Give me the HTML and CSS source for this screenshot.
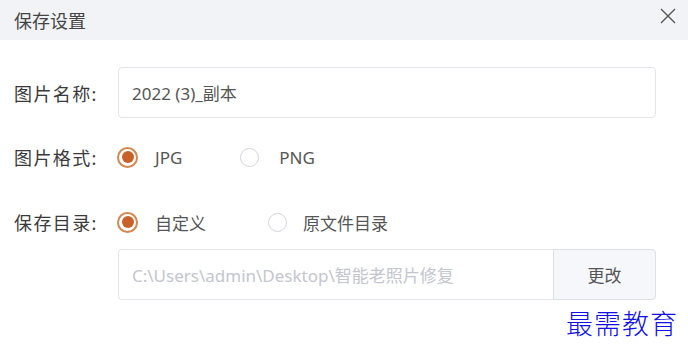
FILE: index.html
```html
<!doctype html>
<html>
<head>
    <meta charset="utf-8">
    <link rel="stylesheet" href="styles.css">
</head>
<body>

<div class="dialog">
    <div class="header">
        <h2 class="title">保存设置</h2>
        <span class="close">
            <svg width="16" height="16" viewBox="0 0 16 16">
                <path d="M1 1 L15 15 M15 1 L1 15" stroke="#555" stroke-width="1.4" fill="none"/>
            </svg>
        </span>
    </div>

    <form class="form">
        <div class="row row-name">
            <label class="label">图片名称:</label>
            <div class="input-text">2022 (3)_副本</div>
        </div>

        <div class="row row-format">
            <label class="label">图片格式:</label>
            <span class="radio checked"></span>
            <span class="radio-text">JPG</span>
            <span class="radio radio-second"></span>
            <span class="radio-text text-second">PNG</span>
        </div>

        <div class="row row-dir">
            <label class="label">保存目录:</label>
            <span class="radio checked"></span>
            <span class="radio-text">自定义</span>
            <span class="radio radio-third"></span>
            <span class="radio-text text-third">原文件目录</span>
        </div>

        <div class="path">
            <div class="path-input">C:\Users\admin\Desktop\智能老照片修复</div>
            <div class="path-button">更改</div>
        </div>
    </form>

    <div class="watermark">最需教育</div>
</div>

</body>
</html>
```

FILE: styles.css
```css
body {
    margin: 0;
    background: #fff;
    font-family: "Noto Sans", "Noto Sans CJK SC", sans-serif;
    color: #333;
}

.header {
    height: 40px;
    background: #f2f3f7;
    display: flex;
    align-items: center;
    justify-content: space-between;
    padding: 0 12px 0 14px;
}

.title {
    margin: 0;
    font-size: 18px;
    font-weight: 400;
    color: #444;
}

.close {
    display: flex;
    margin-top: -8px;
}

.form {
    padding: 27px 32px 0 14px;
}

.row {
    display: flex;
    align-items: center;
}

.label {
    width: 104px;
    font-size: 18px;
    letter-spacing: 1.4px;
    color: #3a3a3a;
}

.row-name {
    height: 51px;
}

.row-format {
    margin-top: 24px;
    height: 30px;
}

.row-dir {
    margin-top: 35px;
    height: 30px;
}

.input-text {
    flex: 1;
    height: 51px;
    box-sizing: border-box;
    border: 1px solid #e4e6ec;
    border-radius: 4px;
    padding: 0 13px;
    display: flex;
    align-items: center;
    font-size: 17px;
    color: #555;
}

.radio {
    width: 21px;
    height: 21px;
    box-sizing: border-box;
    border: 1.5px solid #d3d6dd;
    border-radius: 50%;
    margin-left: -1px;
    position: relative;
}

.radio.checked {
    border: 2px solid #d4874f;
}

.radio.checked::after {
    content: "";
    position: absolute;
    left: 2.5px;
    top: 2.5px;
    width: 12px;
    height: 12px;
    border-radius: 50%;
    background: #c8622a;
}

.radio-second {
    width: 19px;
    height: 19px;
    margin-left: 58px;
}

.radio-third {
    width: 19px;
    height: 19px;
    margin-left: 62px;
}

.radio-text {
    margin-left: 17px;
    font-size: 17px;
    color: #555;
}

.text-second {
    margin-left: 20px;
}

.text-third {
    margin-left: 16px;
}

.path {
    display: flex;
    margin: 12px 0 0 104px;
    height: 51px;
}

.path-input {
    flex: 1;
    box-sizing: border-box;
    border: 1px solid #e4e6ec;
    border-right: none;
    border-radius: 4px 0 0 4px;
    padding: 0 13px;
    display: flex;
    align-items: center;
    font-size: 17px;
    color: #c3c6ce;
}

.path-button {
    width: 103px;
    box-sizing: border-box;
    border: 1px solid #dcdfe6;
    border-radius: 0 4px 4px 0;
    background: #f5f7fa;
    display: flex;
    align-items: center;
    justify-content: center;
    font-size: 17px;
    color: #555;
}

.watermark {
    text-align: right;
    padding-right: 10px;
    margin-top: 8px;
    font-size: 27px;
    letter-spacing: 1px;
    color: #1010e6;
    font-family: "Noto Sans CJK SC", serif;
    font-weight: 300;
    line-height: 30px;
}
```
